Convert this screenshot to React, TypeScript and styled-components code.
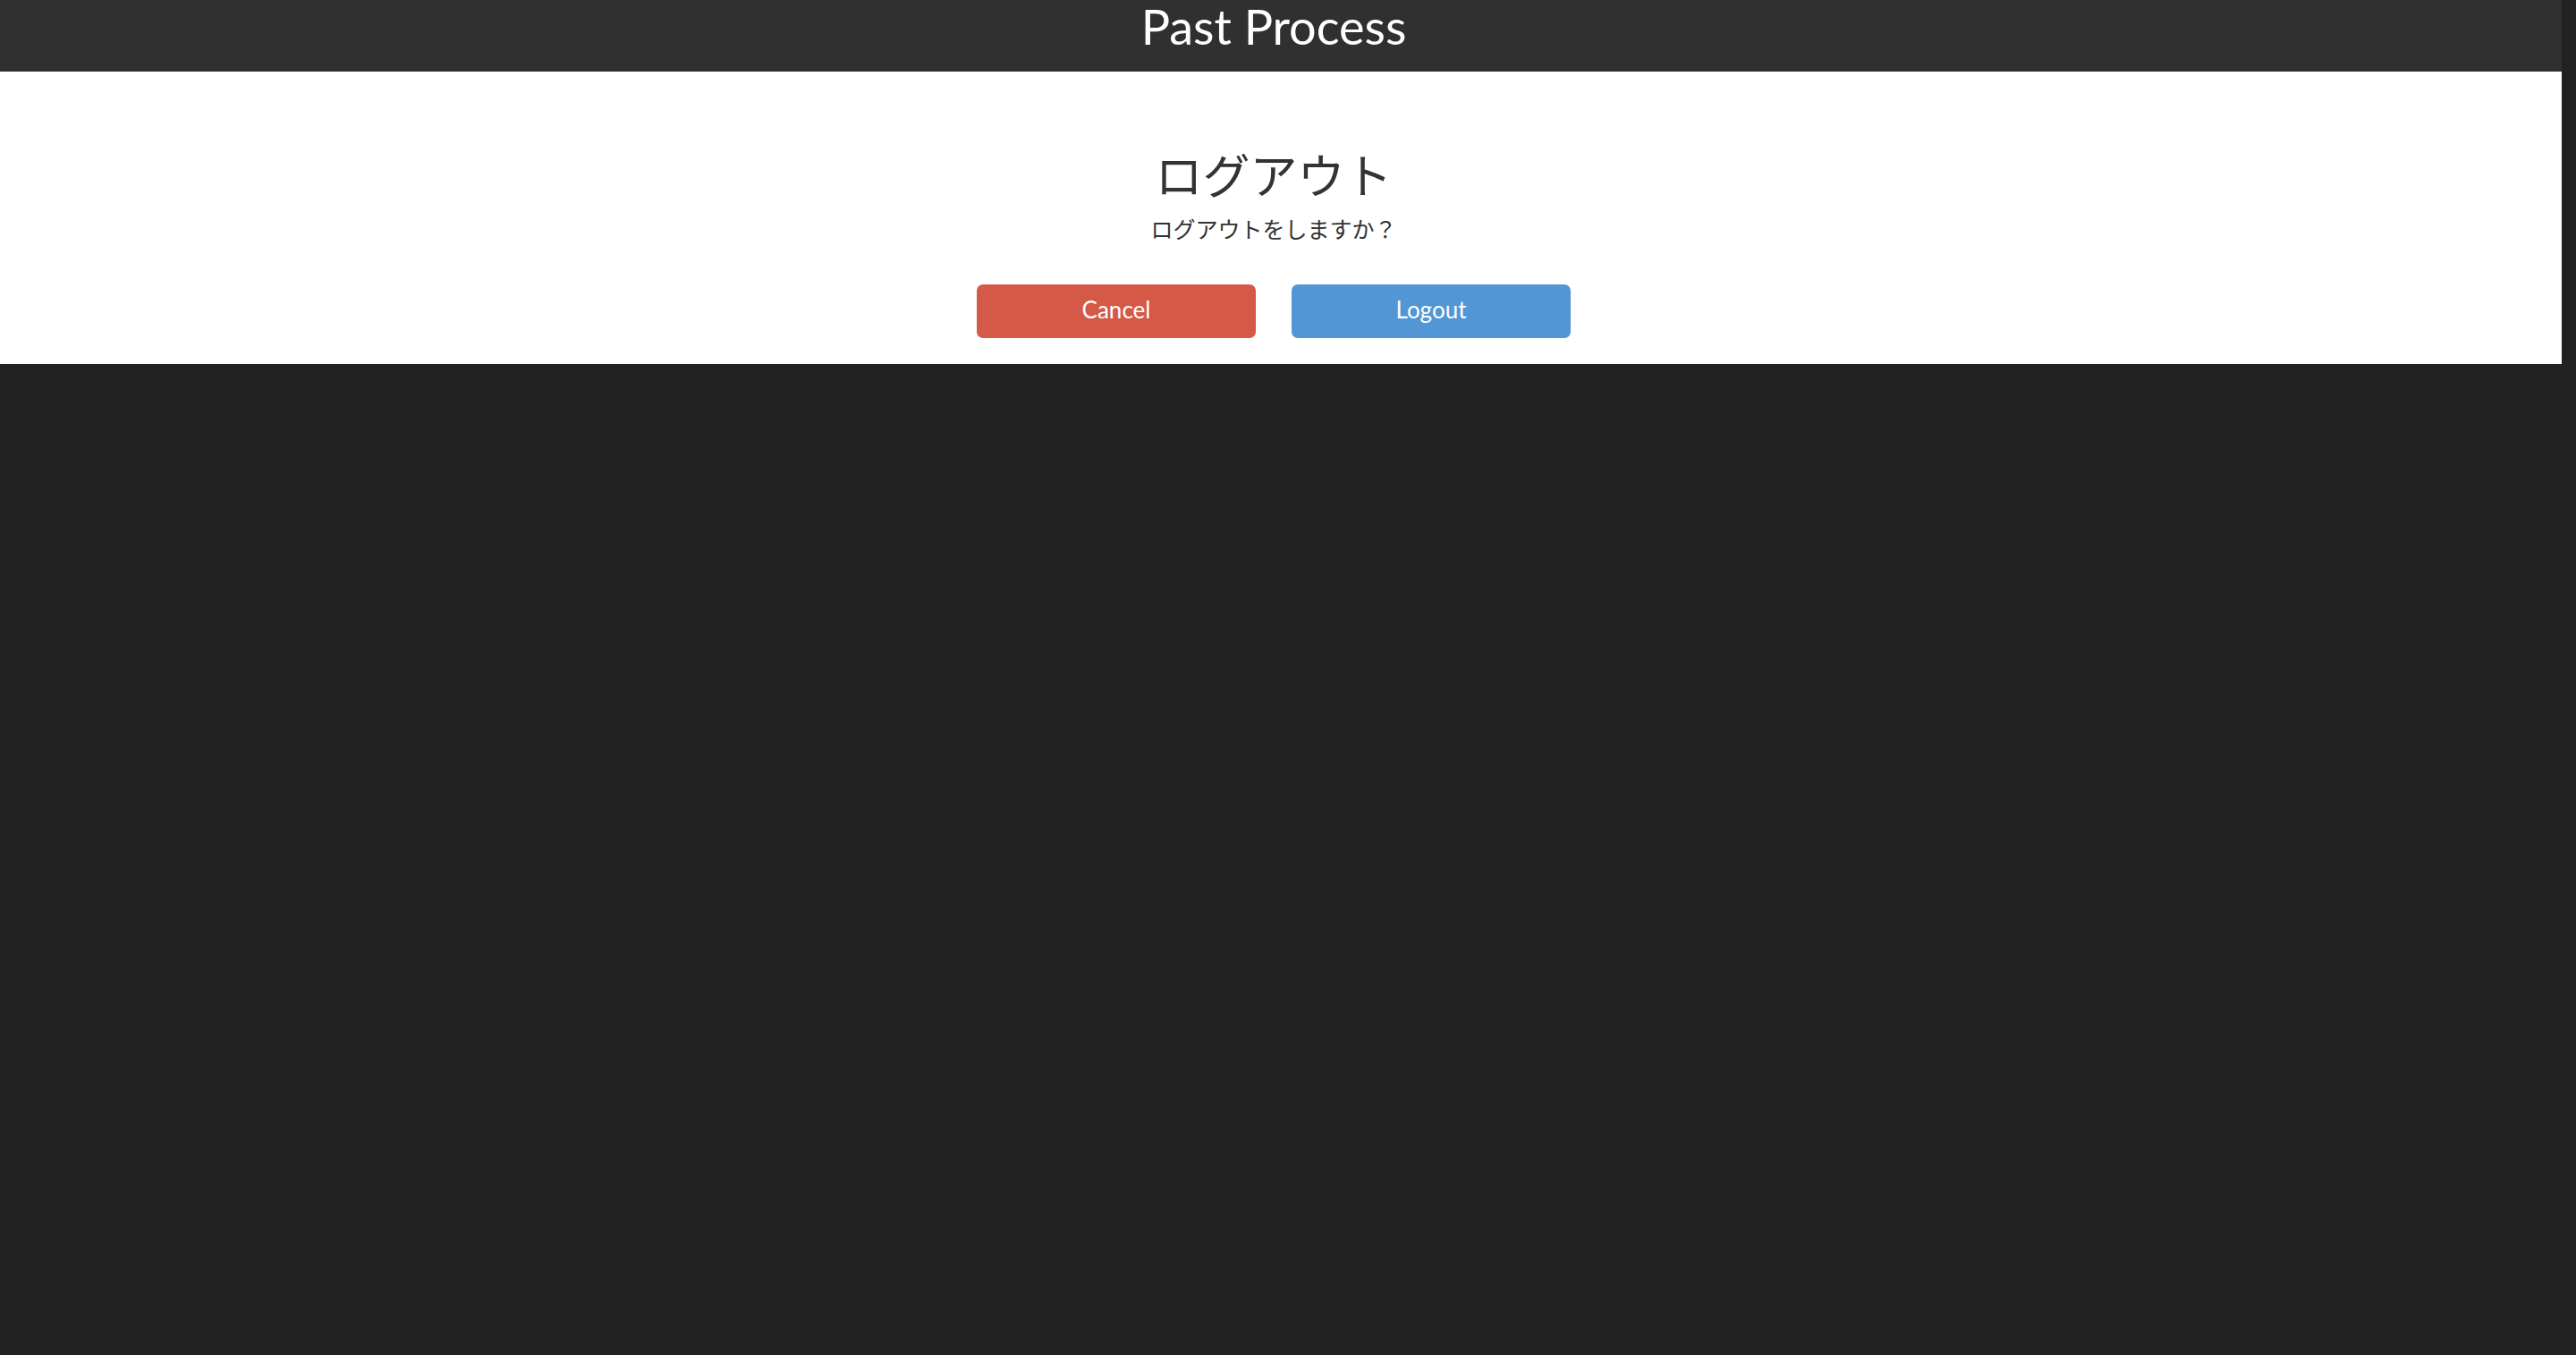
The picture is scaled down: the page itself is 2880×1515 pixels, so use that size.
import React from 'react';
import styled, { createGlobalStyle } from 'styled-components';

const GlobalStyle = createGlobalStyle`
  html, body {
    margin: 0;
    padding: 0;
    background: #222222;
    min-height: 100%;
  }
  body {
    font-family: Lato, "Noto Sans CJK JP", sans-serif;
  }
`;

type ButtonTone = 'danger' | 'primary';

const tones: Record<ButtonTone, string> = {
  danger: '#d55947',
  primary: '#5296d5',
};

const App: React.FC = () => {
  return (
    <>
      <GlobalStyle />
      <Page>
        <Header>
          <Brand>Past Process</Brand>
        </Header>
        <Panel>
          <Heading>ログアウト</Heading>
          <Message>ログアウトをしますか？</Message>
          <Actions>
            <ActionButton $tone="danger">Cancel</ActionButton>
            <ActionButton $tone="primary">Logout</ActionButton>
          </Actions>
        </Panel>
      </Page>
    </>
  );
};

export default App;

const Page = styled.div`
  width: calc(100% - 16px);
  display: flex;
  flex-direction: column;
`;

const Header = styled.header`
  height: 80px;
  box-sizing: border-box;
  padding-right: 16px;
  background: #303030;
  border-bottom: 1px solid #272727;
  display: flex;
  justify-content: center;
`;

const Brand = styled.h1`
  margin: 0;
  font-family: Lato, sans-serif;
  font-weight: 400;
  font-size: 54px;
  line-height: 60px;
  color: #ffffff;
`;

const Panel = styled.main`
  background: #ffffff;
  box-sizing: border-box;
  padding: 84px 16px 29px 0;
  display: flex;
  flex-direction: column;
  align-items: center;
`;

const Heading = styled.h2`
  margin: 0;
  font-family: "Noto Sans CJK JP", sans-serif;
  font-weight: 400;
  font-size: 53px;
  line-height: 60px;
  color: #333333;
`;

const Message = styled.p`
  margin: 13px 0 0;
  font-family: "Noto Sans CJK JP", sans-serif;
  font-weight: 400;
  font-size: 25px;
  line-height: 36px;
  color: #333333;
`;

const Actions = styled.div`
  margin-top: 45px;
  display: flex;
  gap: 40px;
`;

const ActionButton = styled.button<{ $tone: ButtonTone }>`
  width: 312px;
  height: 60px;
  box-sizing: border-box;
  padding: 0 0 4px;
  border: none;
  border-radius: 7px;
  background: ${({ $tone }) => tones[$tone]};
  color: #ffffff;
  font-family: Lato, sans-serif;
  font-size: 26px;
  cursor: pointer;
`;
